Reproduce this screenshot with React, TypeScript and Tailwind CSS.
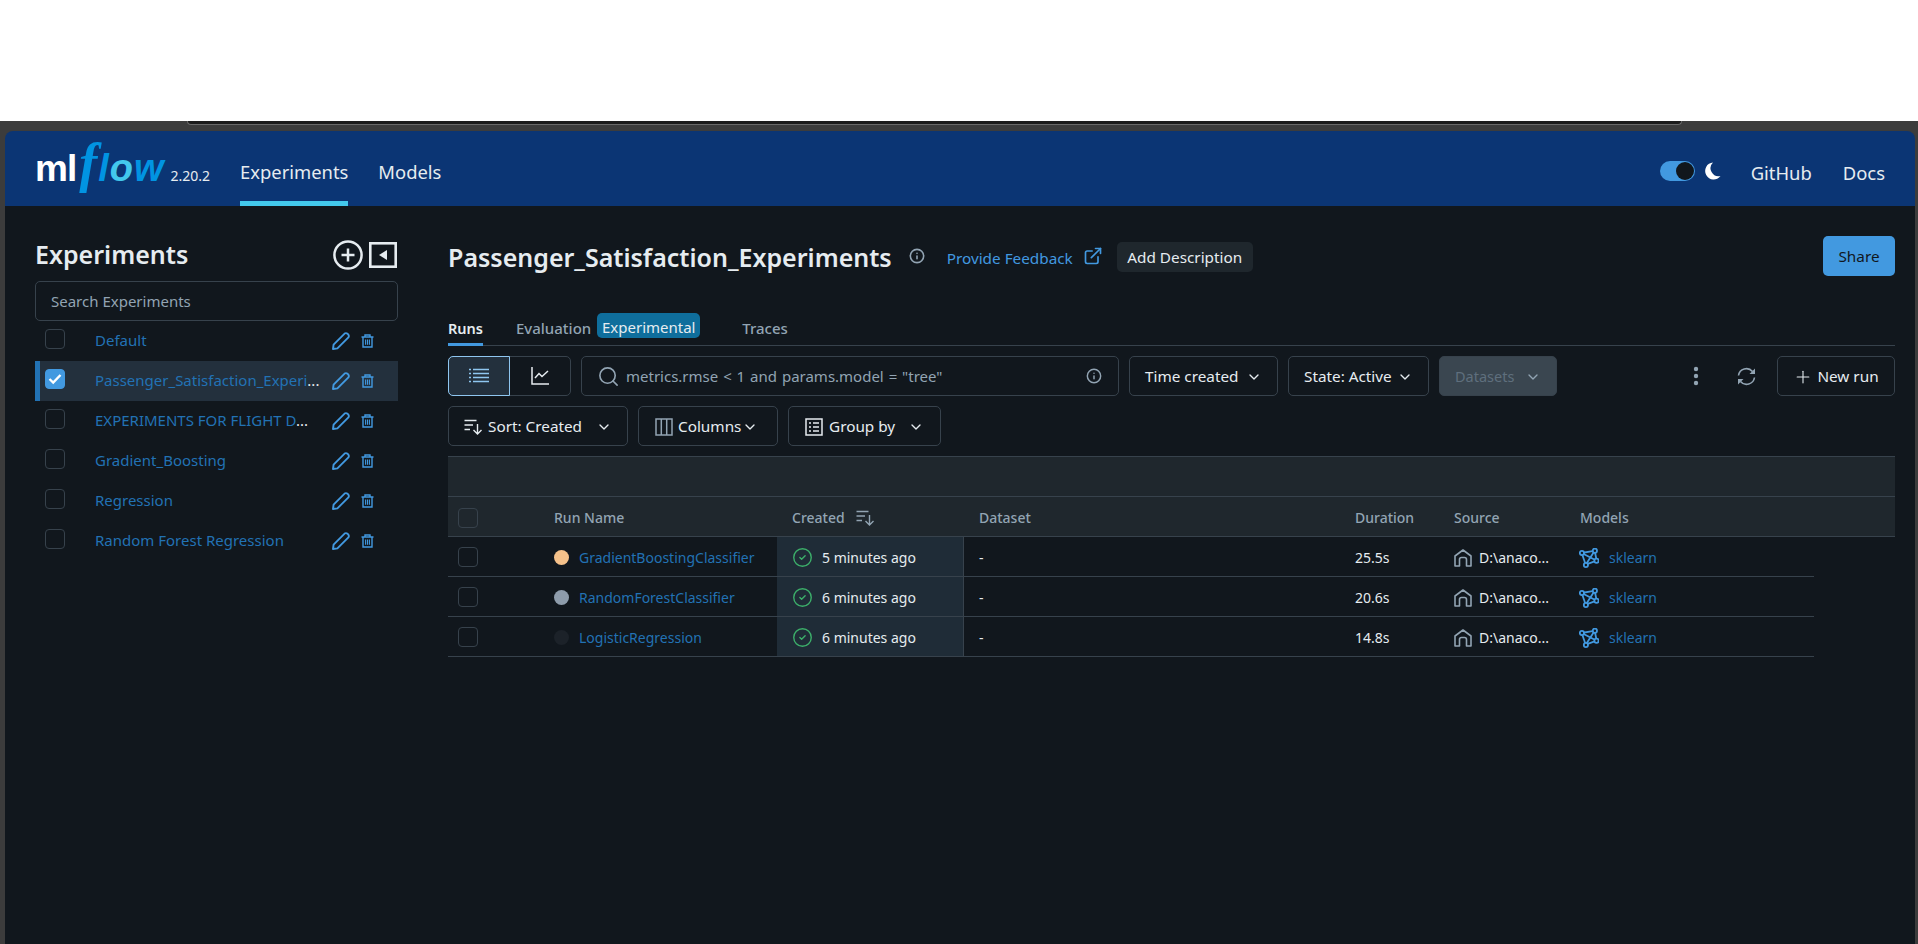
import React from 'react';
import { ChevronDown, CircleCheck, ExternalLink, Info, Plus, Search } from 'lucide-react';

const experiments = [
  { name: 'Default', more: false, selected: false },
  { name: 'Passenger_Satisfaction_Experi', more: true, selected: true },
  { name: 'EXPERIMENTS FOR FLIGHT D', more: true, selected: false },
  { name: 'Gradient_Boosting', more: false, selected: false },
  { name: 'Regression', more: false, selected: false },
  { name: 'Random Forest Regression', more: false, selected: false },
];

const runs = [
  { name: 'GradientBoostingClassifier', dot: 'bg-[#f5c18a]', created: '5 minutes ago', duration: '25.5s' },
  { name: 'RandomForestClassifier', dot: 'bg-[#8e9cab]', created: '6 minutes ago', duration: '20.6s' },
  { name: 'LogisticRegression', dot: 'bg-[#1c2229]', created: '6 minutes ago', duration: '14.8s' },
];

const PencilIcon = () => (
  <svg width="18" height="18" viewBox="0 0 18 18" fill="none" stroke="#4299e0" strokeWidth="1.9" strokeLinejoin="round" className="shrink-0">
    <path d="M1 17 L1.6 12.6 L12.6 1.6 Q14 0.6 15.6 1.8 L16.2 2.4 Q17.4 4 16.4 5.4 L5.4 16.4 Z" />
  </svg>
);

const TrashIcon = () => (
  <svg width="13" height="14" viewBox="0 0 13 14" fill="none" stroke="#4299e0" strokeWidth="1.4" className="shrink-0">
    <path d="M0.5 3 H12.5 M4 3 V1 H9 V3 M2 3 V13 H11 V3" />
    <path d="M4.6 5.5 V10.8 M6.5 5.5 V10.8 M8.4 5.5 V10.8" strokeWidth="1.1" />
  </svg>
);

const SortIcon = ({ color }: { color: string }) => (
  <svg width="18" height="16" viewBox="0 0 18 16" fill="none" stroke={color} strokeWidth="1.4" className="shrink-0">
    <path d="M0.5 1.5 H12.5 M0.5 6 H9 M0.5 10.5 H6" />
    <path d="M13.5 5 V15 M9.5 11 L13.5 15 L17.5 11" />
  </svg>
);

const HomeIcon = () => (
  <svg width="18" height="18" viewBox="0 0 18 18" fill="none" stroke="#92a4b3" strokeWidth="1.6" strokeLinejoin="round" className="shrink-0">
    <path d="M1 17 V7 L9 1 L17 7 V17 H12.5 V10.5 Q12.5 8.5 10.5 8.5 H7.5 Q5.5 8.5 5.5 10.5 V17 Z" />
  </svg>
);

const ModelIcon = () => (
  <svg width="20" height="20" viewBox="0 0 20 20" fill="none" stroke="#4299e0" strokeWidth="1.8" className="shrink-0">
    <path d="M2.7 5 L15.7 2.7 L17.7 12.7 L6.7 16.7 Z M2.7 5 L17.7 12.7 M15.7 2.7 L6.7 16.7" />
    <circle cx="2.9" cy="5" r="2.1" fill="#11171d" />
    <circle cx="15.9" cy="2.7" r="2.1" fill="#11171d" />
    <circle cx="17.5" cy="12.7" r="2.1" fill="#11171d" />
    <circle cx="6.9" cy="17" r="2.1" fill="#11171d" />
  </svg>
);

const KebabIcon = () => (
  <svg width="6" height="20" viewBox="0 0 6 20" fill="#92a4b3" className="shrink-0">
    <circle cx="3" cy="3" r="2.2" />
    <circle cx="3" cy="10" r="2.2" />
    <circle cx="3" cy="17" r="2.2" />
  </svg>
);

const RefreshIcon = () => (
  <svg width="19" height="19" viewBox="0 0 19 19" fill="none" stroke="#92a4b3" strokeWidth="1.6" className="shrink-0">
    <path d="M1.5 8.5 A8 8 0 0 1 15.5 4.5" />
    <path d="M17.5 10.5 A8 8 0 0 1 3.5 14.5" />
    <path d="M18 1.5 V7 H12.5 Z" fill="#92a4b3" stroke="none" />
    <path d="M1 17.5 V12 H6.5 Z" fill="#92a4b3" stroke="none" />
  </svg>
);

const Checkbox = ({ checked = false }: { checked?: boolean }) => (
  <span className={`flex h-[20px] w-[20px] shrink-0 items-center justify-center rounded-[4px] border ${checked ? 'border-[#4299e0] bg-[#4299e0]' : 'border-[#37424c]'}`}>
    {checked && (
      <svg width="14" height="12" viewBox="0 0 14 12" fill="none" stroke="#ffffff" strokeWidth="2.4">
        <path d="M1.5 6 L5.2 9.5 L12.5 2" />
      </svg>
    )}
  </span>
);

const ToolButton = ({ children, className = '' }: { children: React.ReactNode; className?: string }) => (
  <button className={`flex h-[40px] items-center rounded-[5px] border border-[#37424c] pt-px text-[15.3px] text-[#e6ecf0] ${className}`}>
    {children}
  </button>
);

const Logo = () => (
  <div className="flex w-[205px] items-baseline pb-[12px] font-['Liberation_Sans',sans-serif] leading-none">
    <span className="text-[37px] font-bold tracking-[-1px] text-white">ml</span>
    <span className="ml-[3px] font-['Liberation_Serif',serif] text-[54px] font-bold italic text-[#0194e2]">f</span>
    <span className="ml-[1px] text-[38px] font-bold italic tracking-[1px] text-[#0194e2]">
      l<span className="text-[#43c9ed]">o</span>w
    </span>
    <span className="ml-[6px] font-['Noto_Sans',sans-serif] text-[14px] text-[#e6ecf0]">2.20.2</span>
  </div>
);

const Header = () => (
  <header className="flex h-[75px] shrink-0 items-stretch rounded-t-[8px] bg-[#0b3574] pl-[30px] pr-[30px] text-[18.4px] text-[#e6ecf0]">
    <div className="flex items-center"><Logo /></div>
    <nav className="flex gap-[30px]">
      <a className="flex items-center border-b-[5px] border-[#43c9ed] pt-[12px]">Experiments</a>
      <a className="flex items-center border-b-[5px] border-transparent pt-[12px]">Models</a>
    </nav>
    <div className="ml-auto flex items-center pt-[5px]">
      <span className="flex h-[20px] w-[35px] items-center justify-end rounded-full bg-[#4299e0] pr-[1px]">
        <span className="h-[18px] w-[18px] rounded-full bg-[#11171d]" />
      </span>
      <svg width="16" height="18" viewBox="0 0 16 18" fill="#ffffff" className="ml-[10px]">
        <path d="M8 0.5 A8.5 8.5 0 1 0 15.5 14 A8 8 0 0 1 8 0.5 Z" />
      </svg>
      <a className="ml-[30px] pt-[4px]">GitHub</a>
      <a className="ml-[31px] pt-[4px]">Docs</a>
    </div>
  </header>
);

const Sidebar = () => (
  <aside className="w-[363px] shrink-0 text-[15px]">
    <div className="flex h-[46px] items-center justify-between">
      <h1 className="text-[25px] font-semibold text-[#e6ecf0]">Experiments</h1>
      <div className="flex items-center gap-[6px] pr-[1px]">
        <svg width="30" height="30" viewBox="0 0 30 30" fill="none" stroke="#e6ecf0" strokeWidth="2.5">
          <circle cx="15" cy="15" r="13.6" />
          <path d="M15 8.5 V21.5 M8.5 15 H21.5" />
        </svg>
        <svg width="28" height="26" viewBox="0 0 28 26" fill="none" stroke="#e6ecf0" strokeWidth="2.6">
          <rect x="1.3" y="1.3" width="25.4" height="23.4" />
          <path d="M18 8 V18 L10 13 Z" fill="#e6ecf0" stroke="none" />
        </svg>
      </div>
    </div>
    <div className="mt-[3px] flex h-[40px] items-center rounded-[5px] border border-[#37424c] pl-[15px] text-[#92a4b3]">
      Search Experiments
    </div>
    <ul className="w-[363px]">
      {experiments.map((exp) => (
        <li
          key={exp.name}
          className={`flex h-[40px] items-center border-l-[5px] pl-[5px] ${exp.selected ? 'border-[#2272b4] bg-[#23303d]' : 'border-transparent'}`}
        >
          <span className="mb-[4px]"><Checkbox checked={exp.selected} /></span>
          <span className="mb-[2px] ml-[30px] w-[222px] whitespace-nowrap text-[#2272b4]">
            {exp.name}
            {exp.more && <span className="text-[#e6ecf0]">...</span>}
          </span>
          <span className="ml-[15px]"><PencilIcon /></span>
          <span className="ml-[11px]"><TrashIcon /></span>
        </li>
      ))}
    </ul>
  </aside>
);

const TitleRow = () => (
  <div className="flex h-[40px] items-center">
    <h2 className="pt-[4px] text-[25px] font-semibold text-[#e6ecf0]">Passenger_Satisfaction_Experiments</h2>
    <Info size={16} strokeWidth={2.4} className="ml-[17px] text-[#92a4b3]" />
    <a className="ml-[22px] pt-[4px] text-[15.3px] text-[#4299e0]">Provide Feedback</a>
    <ExternalLink size={20} className="ml-[10px] text-[#4299e0]" />
    <button className="ml-[14px] mt-[2px] flex h-[30px] w-[136px] items-center justify-center rounded-[5px] bg-[#1f272d] text-[15.3px] text-[#e6ecf0]">
      Add Description
    </button>
    <button className="ml-auto h-[40px] w-[72px] rounded-[5px] bg-[#4299e0] text-[15.3px] text-[#11171d]">Share</button>
  </div>
);

const Tabs = () => (
  <div className="mt-[28px] flex h-[42px] items-end border-b border-[#37424c] text-[15px] font-medium text-[#92a4b3]">
    <a className="-mb-px flex h-[32px] items-start border-b-[3px] border-[#4299e0] pt-[4px] text-[14.5px] font-semibold text-[#e6ecf0]">Runs</a>
    <a className="ml-[33px] h-[32px] pt-[4px]">Evaluation</a>
    <span className="mb-[7px] ml-[6px] flex h-[25px] w-[103px] items-center justify-center rounded-[5px] bg-[#0f6e9c] pt-[3px] font-normal text-[#e6ecf0]">Experimental</span>
    <a className="ml-[42px] h-[32px] pt-[4px]">Traces</a>
  </div>
);

const FirstToolbar = () => (
  <div className="mt-[10px] flex gap-[10px]">
    <div className="flex h-[40px] w-[123px] shrink-0 rounded-[5px] border border-[#37424c]">
      <span className="-m-px flex w-[62px] items-center justify-center rounded-l-[5px] border border-[#8fc6f0] bg-[#23303d]">
        <svg width="20" height="16" viewBox="0 0 20 16" fill="none" stroke="#8fc6f0" strokeWidth="1.6">
          <path d="M0 1.5 H2 M4 1.5 H20 M0 5.5 H2 M4 5.5 H20 M0 9.5 H2 M4 9.5 H20 M0 13.5 H2 M4 13.5 H20" />
        </svg>
      </span>
      <span className="flex flex-1 items-center justify-center">
        <svg width="18" height="18" viewBox="0 0 18 18" fill="none" stroke="#e6ecf0" strokeWidth="1.5">
          <path d="M1 0 V17 H18 M4 11 L8 6.5 L11 9.5 L17 4" />
        </svg>
      </span>
    </div>
    <div className="flex h-[40px] w-[538px] items-center rounded-[5px] border border-[#37424c] pl-[15px] pr-[16px] text-[15px] text-[#92a4b3]">
      <Search size={23} strokeWidth={1.7} />
      <span className="ml-[6px] pt-px [word-spacing:1px]">metrics.rmse &lt; 1 and params.model = "tree"</span>
      <Info size={16} strokeWidth={2.2} className="ml-auto" />
    </div>
    <ToolButton className="w-[149px] justify-between px-[15px]">Time created<ChevronDown size={16} /></ToolButton>
    <ToolButton className="w-[141px] justify-between px-[15px]">State: Active<ChevronDown size={16} /></ToolButton>
    <button className="flex h-[40px] w-[118px] items-center justify-between rounded-[5px] border border-[#37424c] bg-[#3a4650] px-[15px] pt-px text-[14.5px] text-[#5f6f7d]">
      Datasets<ChevronDown size={16} className="text-[#92a4b3]" />
    </button>
    <div className="ml-auto flex items-center">
      <KebabIcon />
      <span className="ml-[38px]"><RefreshIcon /></span>
      <ToolButton className="ml-[21px] w-[118px] justify-center gap-[4px]"><Plus size={20} strokeWidth={1.3} />New run</ToolButton>
    </div>
  </div>
);

const SecondToolbar = () => (
  <div className="mt-[10px] flex gap-[10px]">
    <ToolButton className="w-[180px] px-[15px]">
      <SortIcon color="#e6ecf0" />
      <span className="ml-[6px]">Sort: Created</span>
      <ChevronDown size={16} className="ml-auto" />
    </ToolButton>
    <ToolButton className="w-[140px] px-[16px]">
      <svg width="18" height="18" viewBox="0 0 18 18" fill="none" stroke="#92a4b3" strokeWidth="1.5">
        <rect x="1" y="1" width="16" height="16" />
        <path d="M6.3 1 V17 M11.7 1 V17" />
      </svg>
      <span className="ml-[5px]">Columns</span>
      <ChevronDown size={16} className="ml-[1px]" />
    </ToolButton>
    <ToolButton className="w-[153px] px-[16px]">
      <svg width="18" height="18" viewBox="0 0 18 18" fill="none" stroke="#e6ecf0" strokeWidth="1.5">
        <rect x="1" y="1" width="16" height="16" />
        <path d="M4 5 H6 M8 5 H14 M4 9 H6 M8 9 H14 M4 13 H6 M8 13 H14" />
      </svg>
      <span className="ml-[6px]">Group by</span>
      <ChevronDown size={16} className="ml-auto" />
    </ToolButton>
  </div>
);

const RunsTable = () => (
  <div className="mt-[10px] text-[14px]">
    <div className="h-[41px] border-y border-[#37424c] bg-[#1f272d]" />
    <div className="flex h-[40px] items-center border-b border-[#37424c] bg-[#1f272d] pt-[2px] font-medium text-[#92a4b3]">
      <span className="w-[91px] pl-[10px]"><Checkbox /></span>
      <span className="w-[238px] pl-[15px]">Run Name</span>
      <span className="flex w-[187px] items-center pl-[15px]">Created<span className="ml-[11px]"><SortIcon color="#92a4b3" /></span></span>
      <span className="w-[376px] pl-[15px]">Dataset</span>
      <span className="w-[99px] pl-[15px]">Duration</span>
      <span className="w-[126px] pl-[15px]">Source</span>
      <span className="pl-[15px]">Models</span>
    </div>
    {runs.map((run) => (
      <div key={run.name} className="flex h-[40px] w-[1366px] items-stretch border-b border-[#37424c] text-[#e6ecf0]">
        <span className="flex w-[91px] items-center pl-[10px] pt-px"><Checkbox /></span>
        <span className="flex w-[238px] items-center pl-[15px] pt-[2px]">
          <span className={`h-[15px] w-[15px] rounded-full ${run.dot}`} />
          <span className="ml-[10px] text-[#2272b4]">{run.name}</span>
        </span>
        <span className="flex w-[187px] items-center border-r border-[#37424c] bg-[#1f2c37] pl-[15px] pt-[2px]">
          <CircleCheck size={21} strokeWidth={1.6} className="text-[#3caf6a]" />
          <span className="ml-[9px]">{run.created}</span>
        </span>
        <span className="flex w-[376px] items-center pl-[15px] pt-[2px]">-</span>
        <span className="flex w-[99px] items-center pl-[15px] pt-[2px]">{run.duration}</span>
        <span className="flex w-[126px] items-center pl-[15px] pt-[2px]">
          <HomeIcon />
          <span className="ml-[7px]">D:\anaco...</span>
        </span>
        <span className="flex items-center pl-[14px] pt-[2px]">
          <ModelIcon />
          <span className="ml-[10px] text-[#2272b4]">sklearn</span>
        </span>
      </div>
    ))}
  </div>
);

export default function App() {
  return (
    <div className="flex h-[944px] w-[1918px] flex-col overflow-hidden bg-white font-['Noto_Sans',sans-serif]">
      <div className="h-[121px] shrink-0" />
      <div className="flex min-h-0 flex-1 flex-col bg-[#3c3c3c] pl-[5px] pr-[3px]">
        <div className="mb-[6px] ml-[182px] mr-[233px] h-[4px] shrink-0 rounded-b-[6px] border-x border-b border-[#6a6a6a] bg-[#1c1c1c]" />
        <Header />
        <main className="flex min-h-0 flex-1 bg-[#11171d] pl-[30px] pr-[20px] pt-[26px]">
          <Sidebar />
          <section className="ml-[50px] flex-1 pt-[4px]">
            <TitleRow />
            <Tabs />
            <FirstToolbar />
            <SecondToolbar />
            <RunsTable />
          </section>
        </main>
      </div>
    </div>
  );
}
